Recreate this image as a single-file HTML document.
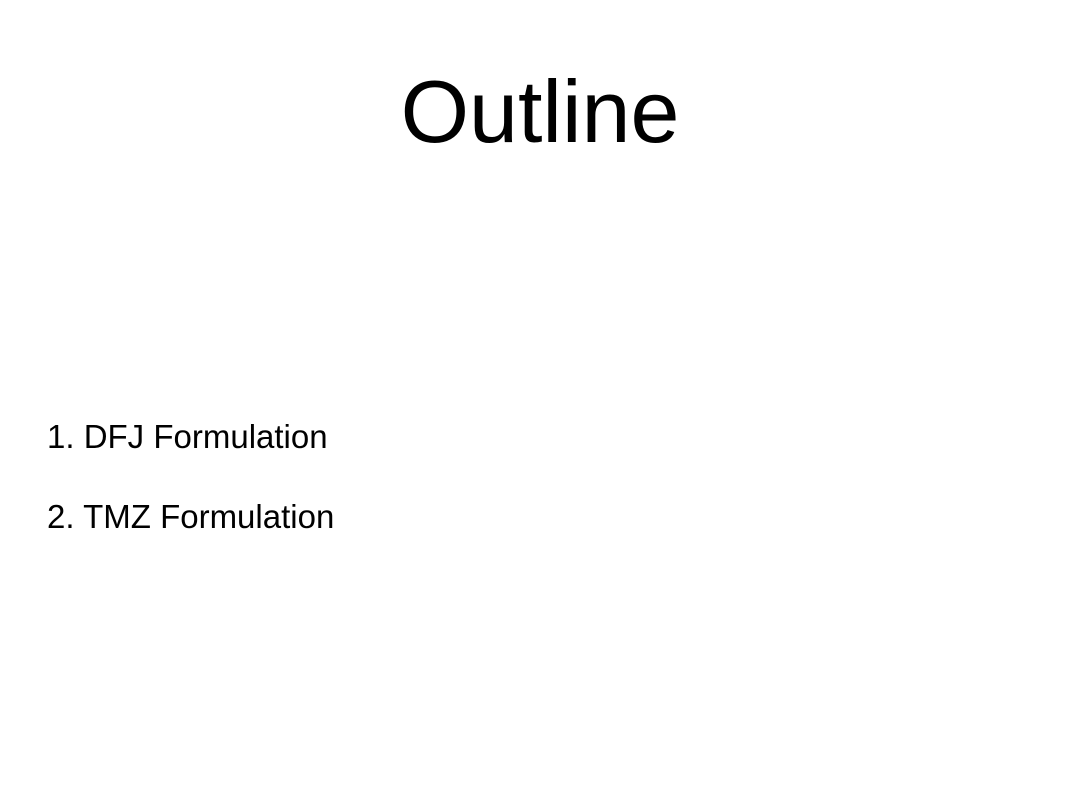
<!DOCTYPE html>
<html><head><meta charset="utf-8"><style>
html,body{margin:0;padding:0;background:#fff;}
body{width:1080px;height:810px;position:relative;overflow:hidden;font-family:"Liberation Sans",sans-serif;color:#000;}
.t{position:absolute;left:0;width:1080px;text-align:center;top:62px;font-size:88px;line-height:100px;font-weight:normal;}
.i{position:absolute;left:47px;font-size:33px;line-height:36px;}
</style></head><body>
<div class="t">Outline</div>
<div class="i" style="top:419px">1. DFJ Formulation</div>
<div class="i" style="top:499px">2. TMZ Formulation</div>
</body></html>
